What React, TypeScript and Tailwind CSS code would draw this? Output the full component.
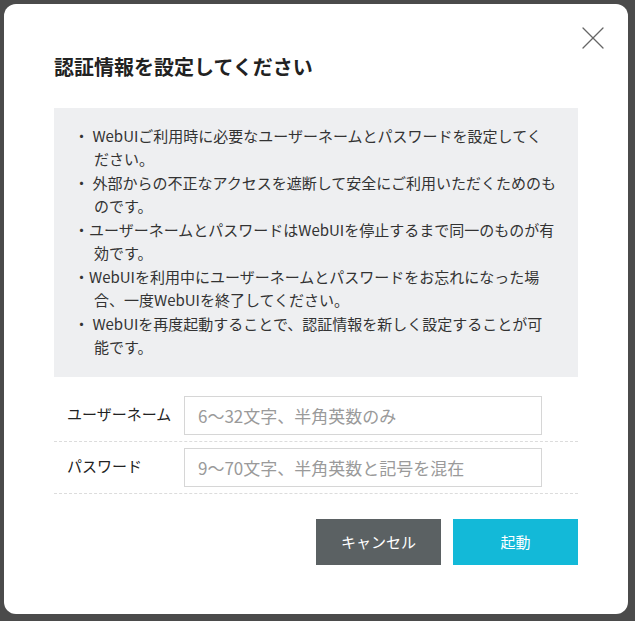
import { X } from 'lucide-react';

const notes: { bullet: string; lines: string[] }[] = [
    { bullet: '・ ', lines: ['WebUIご利用時に必要なユーザーネームとパスワードを設定してく', 'ださい。'] },
    { bullet: '・ ', lines: ['外部からの不正なアクセスを遮断して安全にご利用いただくためのも', 'のです。'] },
    { bullet: '・', lines: ['ユーザーネームとパスワードはWebUIを停止するまで同一のものが有', '効です。'] },
    { bullet: '・', lines: ['WebUIを利用中にユーザーネームとパスワードをお忘れになった場', '合、一度WebUIを終了してください。'] },
    { bullet: '・ ', lines: ['WebUIを再度起動することで、認証情報を新しく設定することが可', '能です。'] },
];

const fields = [
    { label: 'ユーザーネーム', placeholder: '6〜32文字、半角英数のみ', type: 'text' },
    { label: 'パスワード', placeholder: '9〜70文字、半角英数と記号を混在', type: 'password' },
];

export default function App() {
    return (
        <div
            className="h-[621px] w-[635px] overflow-hidden bg-[#4b4b4b] pt-[4px] pl-[4px]"
            style={{ fontFamily: '"Noto Sans CJK JP", "Noto Sans", sans-serif' }}
        >
            <div className="relative flex h-[610px] w-[624px] flex-col rounded-[12px] bg-white px-[50px]">
                <button className="absolute right-[15px] top-[14px] text-[#666]">
                    <X size={40} strokeWidth={1.3} absoluteStrokeWidth />
                </button>

                <h2 className="mt-[49px] text-[20px] font-bold leading-[28px] text-[#222]">
                    認証情報を設定してください
                </h2>

                <ul className="mt-[27px] flex flex-col gap-[1px] bg-[#eeeff1] pl-[40px] pr-[16px] pt-[16px] pb-[19px] text-[15px] leading-[23px] text-[#333]">
                    {notes.map((n, i) => (
                        <li key={i} className="-indent-[20px] whitespace-pre">
                            {n.bullet}
                            {n.lines[0]}
                            <br />
                            {n.lines[1]}
                        </li>
                    ))}
                </ul>

                <div className="mt-[13px] flex flex-col">
                    {fields.map((f) => (
                        <div key={f.label} className="flex items-center border-b border-dashed border-[#dcdcdc] py-[6px]">
                            <label className="w-[130px] pl-[13px] pb-[3px] text-[15px] text-[#222]">{f.label}</label>
                            <input
                                type={f.type}
                                placeholder={f.placeholder}
                                className="h-[39px] w-[358px] border border-[#d6d6d6] px-[13px] text-[17px] text-[#333] outline-none placeholder:text-[#9a9a9a]"
                            />
                        </div>
                    ))}
                </div>

                <div className="mt-[25px] flex justify-end gap-[12px]">
                    <button className="h-[46px] w-[125px] bg-[#5b6163] text-[15px] text-white">キャンセル</button>
                    <button className="h-[46px] w-[125px] bg-[#13b9d8] text-[15px] text-white">起動</button>
                </div>
            </div>
        </div>
    );
}
